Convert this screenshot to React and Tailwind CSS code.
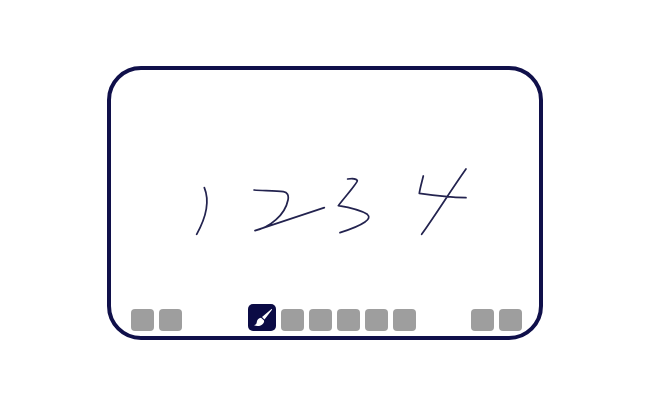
import React from "react";

const Key = () => <div className="h-[22px] w-[23px] rounded-[4px] bg-[#9e9e9e]" />;

const strokes = [
  "M103 113 C114 140 118 185 80 253",
  "M252 120 C285 122 320 122 340 125 C352 127 357 135 354 150 C345 195 300 232 255 242 L463 173",
  "M533 87 C545 85 560 86 562 92 C563 98 530 135 505 167 C535 172 575 182 592 193 C600 200 597 208 585 216 C565 230 535 240 510 248",
  "M760 78 C756 95 750 115 748 130 C790 136 840 142 888 143 M888 57 C840 125 800 190 755 253",
];

export default function App() {
  return (
    <div className="flex h-[406px] w-[650px] items-center justify-center bg-white">
      <div className="flex h-[274px] w-[436px] flex-col rounded-[34px] border-4 border-[#10104a] bg-white">
        <svg className="min-h-0 w-full flex-1" viewBox="111 70 428 234" preserveAspectRatio="xMinYMin meet">
          <g transform="translate(170 150) scale(0.3333)" fill="none" stroke="#23234f" strokeWidth="5.2" strokeLinecap="round" strokeLinejoin="round">
            {strokes.map((d) => <path key={d} d={d} />)}
          </g>
        </svg>
        <div className="flex items-end pb-[5px] pl-[20px] pr-[17px]">
          <div className="flex gap-[5px]">
            <Key />
            <Key />
          </div>
          <div className="ml-[66px] flex items-end gap-[5px]">
            <div className="h-[27px] w-[28px] rounded-[5px] bg-[#0b0b45]">
              <svg viewBox="0 0 28 27" className="h-full w-full" fill="white">
                <path d="M23.5 5 C24 5 24.2 5.5 23.8 6 L16.5 15.5 L14 13 Z" />
                <path d="M13 13.8 C10.5 14.3 9 15.8 8.8 18 C8.7 19.8 7.6 20.8 6 21.3 C9 22.6 13 22.2 15 19.7 C16.2 18.2 16.4 17 15.8 16.2 Z" />
              </svg>
            </div>
            <Key />
            <Key />
            <Key />
            <Key />
            <Key />
          </div>
          <div className="ml-auto flex gap-[5px]">
            <Key />
            <Key />
          </div>
        </div>
      </div>
    </div>
  );
}
